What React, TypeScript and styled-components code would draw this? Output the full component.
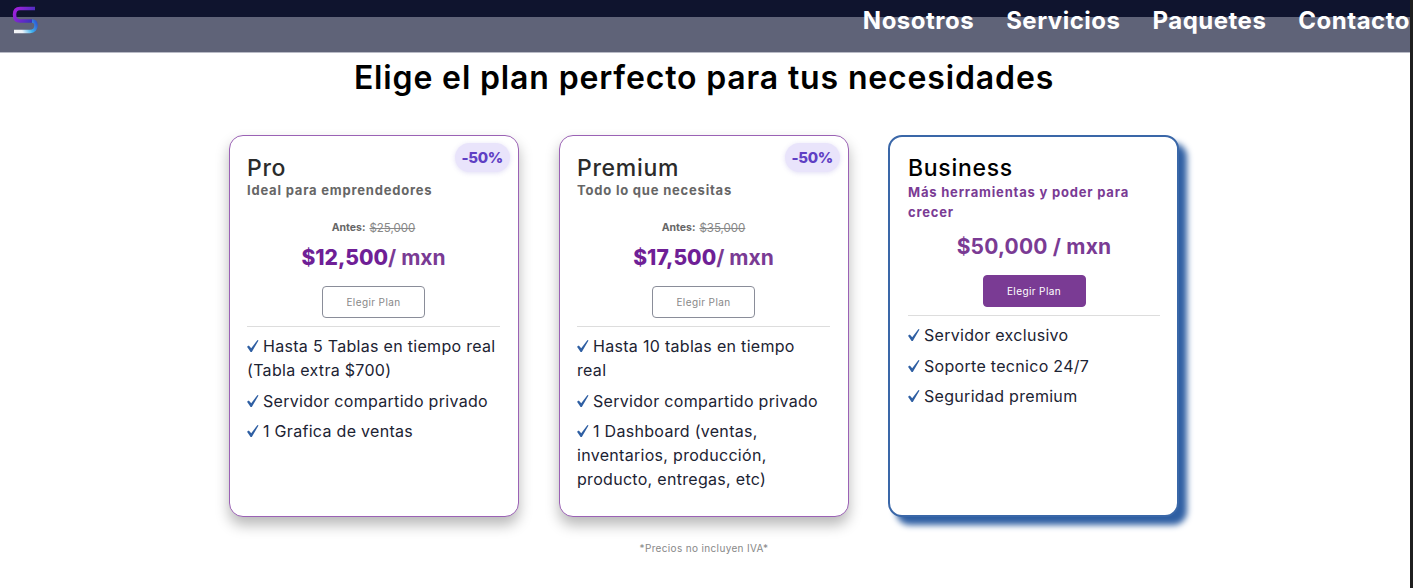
import React from "react";
import styled, { createGlobalStyle } from "styled-components";

const GlobalStyle = createGlobalStyle`
  html, body {
    margin: 0;
    height: 100%;
    overflow: hidden;
    background: #fff;
    font-family: "Inter", "Open Sans", sans-serif;
  }
  * { box-sizing: border-box; }
`;

const Page = styled.div`
  width: 1413px;
  height: 588px;
  border-right: 3px solid #1f1f1f;
  background: #fff;
`;

const Header = styled.header`
  height: 53px;
  display: flex;
  justify-content: space-between;
  padding: 6px 0 0 12px;
  background: linear-gradient(#0f142e 17px, #5f6378 17px);
  border-bottom: 1px solid #b9bbc6;
`;

const Nav = styled.nav`
  display: flex;
  gap: 32px;
  height: 29px;
  align-items: center;
`;

const NavLink = styled.a`
  color: #fff;
  font-size: 24px;
  font-weight: 700;
  letter-spacing: 0.5px;
`;

const Title = styled.h1`
  margin: 5px 0 0;
  padding-right: 2px;
  height: 77px;
  text-align: center;
  font-size: 32px;
  line-height: 40px;
  font-weight: 560;
  color: #000;
  letter-spacing: 0.85px;
`;

const Cards = styled.section`
  display: flex;
  justify-content: center;
  gap: 40px;
  padding-right: 2px;
`;

const Card = styled.article<{ $featured?: boolean }>`
  position: relative;
  width: ${(p) => (p.$featured ? "291px" : "290px")};
  height: 382px;
  margin-left: ${(p) => (p.$featured ? "-1px" : "0")};
  padding: ${(p) => (p.$featured ? "18px 17px 18px 18px" : "18px 18px 18px 17px")};
  background: #fff;
  border-radius: 14px;
  border: ${(p) => (p.$featured ? "2px solid #3a67a8" : "1px solid #9b62b5")};
  box-shadow: ${(p) =>
    p.$featured
      ? "8px 8px 6px #2f5fa3"
      : "0 8px 14px rgba(0, 0, 0, 0.28)"};
`;

const Badge = styled.span`
  position: absolute;
  top: 7px;
  right: 8px;
  padding: 0 7px;
  height: 29px;
  line-height: 29px;
  border-radius: 15px;
  background: #e9e4fb;
  box-shadow: 0 1px 5px rgba(90, 70, 200, 0.18);
  color: #5f3fc4;
  font-size: 15px;
  font-weight: 800;
  letter-spacing: -0.3px;
`;

const PlanName = styled.h2<{ $featured?: boolean }>`
  margin: 0 0 ${(p) => (p.$featured ? "0" : "-1px")};
  padding-top: ${(p) => (p.$featured ? "0" : "1px")};
  font-size: 23px;
  line-height: 27px;
  font-weight: 500;
  color: ${(p) => (p.$featured ? "#000" : "#2b2b2b")};
  letter-spacing: 0.7px;
`;

const Tagline = styled.p<{ $featured?: boolean }>`
  margin: 0;
  font-size: 13px;
  font-weight: 700;
  line-height: ${(p) => (p.$featured ? "20px" : "18px")};
  color: ${(p) => (p.$featured ? "#7a3b94" : "#666")};
  letter-spacing: 0.8px;
`;

const OldPrice = styled.div`
  display: flex;
  justify-content: center;
  align-items: center;
  gap: 4px;
  margin-top: 18px;
  height: 20px;
  font-size: 10.500px;
  color: #666;
  font-weight: 700;
`;

const Struck = styled.s`
  padding-top: 1px;
  font-size: 11.500px;
  font-weight: 400;
  color: #888;
`;

const Price = styled.div<{ $featured?: boolean }>`
  text-align: center;
  margin-top: ${(p) => (p.$featured ? "10px" : "6px")};
  font-size: 21px;
  line-height: 30px;
  font-weight: 700;
  color: #7a3b94;
  letter-spacing: ${(p) => (p.$featured ? "0.2px" : "0")};
`;

const PriceAccent = styled.span`
  color: #6f1f96;
  font-weight: 800;
`;

const Button = styled.button<{ $filled?: boolean }>`
  display: block;
  width: 103px;
  height: 32px;
  margin: 13px auto 8px;
  border-radius: 4px;
  font-family: inherit;
  font-size: 10px;
  letter-spacing: 0.4px;
  background: ${(p) => (p.$filled ? "#7a3b94" : "#fff")};
  color: ${(p) => (p.$filled ? "#fff" : "#888")};
  border: 1px solid ${(p) => (p.$filled ? "#7a3b94" : "#8a8d99")};
`;

const Divider = styled.hr`
  margin: 0;
  border: 0;
  border-top: 1px solid #ddd;
`;

const Features = styled.ul`
  list-style: none;
  margin: 7px 0 0;
  padding: 0;
`;

const Feature = styled.li`
  font-size: 16px;
  line-height: 24px;
  margin-bottom: 6.600px;
  color: #1c2333;
  letter-spacing: 0.3px;
  white-space: pre-line;
`;

const CheckMark = styled.svg`
  display: inline-block;
  width: 12px;
  height: 12px;
  margin-right: 4px;
  vertical-align: 0;
  fill: #2f5fa3;
`;

const Note = styled.p`
  margin: 25px 0 0;
  padding-right: 2px;
  text-align: center;
  font-size: 10px;
  letter-spacing: 0.35px;
  color: #888;
`;

const Logo = () => (
  <svg width="28" height="28" viewBox="0 0 28 28" fill="none">
    <defs>
      <linearGradient id="logoTop" gradientUnits="userSpaceOnUse" x1="2" y1="3" x2="22" y2="16">
        <stop offset="0" stopColor="#a51fdc" />
        <stop offset="1" stopColor="#3034b8" />
      </linearGradient>
      <linearGradient id="logoEnd" gradientUnits="userSpaceOnUse" x1="25" y1="15" x2="2" y2="26">
        <stop offset="0" stopColor="#2c50d0" />
        <stop offset="0.35" stopColor="#3fb2ee" />
        <stop offset="0.7" stopColor="#eef2f8" />
        <stop offset="1" stopColor="#f4f4f6" />
      </linearGradient>
    </defs>
    <path
      d="M23 2.500H8C4.500 2.500 2.500 4.500 2.500 8.500S4.500 15 8 15H20"
      stroke="url(#logoTop)"
      strokeWidth="3.500"
    />
    <path
      d="M20 15C22.500 15 24 16.500 24 19.500S22 25.500 18 25.500H2"
      stroke="url(#logoEnd)"
      strokeWidth="3.500"
    />
  </svg>
);

type Plan = {
  name: string;
  tagline: string;
  before: string;
  price: string;
  features: string[];
};

const plans: Plan[] = [
  {
    name: "Pro",
    tagline: "Ideal para emprendedores",
    before: "$25,000",
    price: "$12,500",
    features: [
      "Hasta 5 Tablas en tiempo real (Tabla extra $700)",
      "Servidor compartido privado",
      "1 Grafica de ventas",
    ],
  },
  {
    name: "Premium",
    tagline: "Todo lo que necesitas",
    before: "$35,000",
    price: "$17,500",
    features: [
      "Hasta 10 tablas en tiempo\nreal",
      "Servidor compartido privado",
      "1 Dashboard (ventas, inventarios, producción, producto, entregas, etc)",
    ],
  },
];

const FeatureList: React.FC<{ items: string[] }> = ({ items }) => (
  <Features>
    {items.map((item) => (
      <Feature key={item}>
        <CheckMark viewBox="0 0 12 12">
          <path d="M0 6.800L1.800 5.600L4.200 8.200L10.500 0L11.500 0.500L4.800 12H3.600Z" />
        </CheckMark>
        {item}
      </Feature>
    ))}
  </Features>
);

const App: React.FC = () => (
  <Page>
    <GlobalStyle />
    <Header>
      <Logo />
      <Nav>
        <NavLink>Nosotros</NavLink>
        <NavLink>Servicios</NavLink>
        <NavLink>Paquetes</NavLink>
        <NavLink>Contacto</NavLink>
      </Nav>
    </Header>
    <Title>Elige el plan perfecto para tus necesidades</Title>
    <Cards>
      {plans.map((plan) => (
        <Card key={plan.name}>
          <Badge>-50%</Badge>
          <PlanName>{plan.name}</PlanName>
          <Tagline>{plan.tagline}</Tagline>
          <OldPrice>
            Antes: <Struck>{plan.before}</Struck>
          </OldPrice>
          <Price>
            <PriceAccent>{plan.price}</PriceAccent>/ mxn
          </Price>
          <Button type="button">Elegir Plan</Button>
          <Divider />
          <FeatureList items={plan.features} />
        </Card>
      ))}
      <Card $featured>
        <PlanName $featured>Business</PlanName>
        <Tagline $featured>Más herramientas y poder para crecer</Tagline>
        <Price $featured>$50,000 / mxn</Price>
        <Button type="button" $filled>
          Elegir Plan
        </Button>
        <Divider />
        <FeatureList
          items={["Servidor exclusivo", "Soporte tecnico 24/7", "Seguridad premium"]}
        />
      </Card>
    </Cards>
    <Note>*Precios no incluyen IVA*</Note>
  </Page>
);

export default App;
